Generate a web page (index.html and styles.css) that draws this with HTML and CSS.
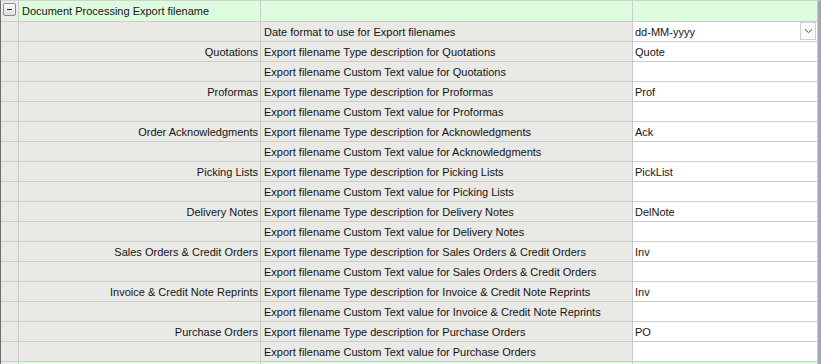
FILE: index.html
```html
<!DOCTYPE html>
<html lang="en">
<head>
  <meta charset="UTF-8">
  <title>Document Processing Export filename</title>
  <link rel="stylesheet" href="styles.css">
</head>
<body>
  <div class="grid">
    <!-- Fila de grupo -->
    <div class="row group">
      <div class="cell indent"><span class="toggle"></span></div>
      <div class="cell cat title">Document Processing Export filename</div>
      <div class="cell desc"></div>
      <div class="cell val"></div>
    </div>

    <div class="row">
      <div class="cell indent"></div>
      <div class="cell cat"></div>
      <div class="cell desc">Date format to use for Export filenames</div>
      <div class="cell val combo">dd-MM-yyyy
        <span class="drop"><svg width="9" height="6" viewBox="0 0 9 6"><path d="M1 1.5 L4.5 4.5 L8 1.5" fill="none" stroke="#555" stroke-width="1"/></svg></span>
      </div>
    </div>

    <div class="row"><div class="cell indent"></div><div class="cell cat">Quotations</div><div class="cell desc">Export filename Type description for Quotations</div><div class="cell val">Quote</div></div>
    <div class="row"><div class="cell indent"></div><div class="cell cat"></div><div class="cell desc">Export filename Custom Text value for Quotations</div><div class="cell val"></div></div>

    <div class="row"><div class="cell indent"></div><div class="cell cat">Proformas</div><div class="cell desc">Export filename Type description for Proformas</div><div class="cell val">Prof</div></div>
    <div class="row"><div class="cell indent"></div><div class="cell cat"></div><div class="cell desc">Export filename Custom Text value for Proformas</div><div class="cell val"></div></div>

    <div class="row"><div class="cell indent"></div><div class="cell cat">Order Acknowledgments</div><div class="cell desc">Export filename Type description for Acknowledgments</div><div class="cell val">Ack</div></div>
    <div class="row"><div class="cell indent"></div><div class="cell cat"></div><div class="cell desc">Export filename Custom Text value for Acknowledgments</div><div class="cell val"></div></div>

    <div class="row"><div class="cell indent"></div><div class="cell cat">Picking Lists</div><div class="cell desc">Export filename Type description for Picking Lists</div><div class="cell val">PickList</div></div>
    <div class="row"><div class="cell indent"></div><div class="cell cat"></div><div class="cell desc">Export filename Custom Text value for Picking Lists</div><div class="cell val"></div></div>

    <div class="row"><div class="cell indent"></div><div class="cell cat">Delivery Notes</div><div class="cell desc">Export filename Type description for Delivery Notes</div><div class="cell val">DelNote</div></div>
    <div class="row"><div class="cell indent"></div><div class="cell cat"></div><div class="cell desc">Export filename Custom Text value for Delivery Notes</div><div class="cell val"></div></div>

    <div class="row"><div class="cell indent"></div><div class="cell cat">Sales Orders &amp; Credit Orders</div><div class="cell desc">Export filename Type description for Sales Orders &amp; Credit Orders</div><div class="cell val">Inv</div></div>
    <div class="row"><div class="cell indent"></div><div class="cell cat"></div><div class="cell desc">Export filename Custom Text value for Sales Orders &amp; Credit Orders</div><div class="cell val"></div></div>

    <div class="row"><div class="cell indent"></div><div class="cell cat">Invoice &amp; Credit Note Reprints</div><div class="cell desc">Export filename Type description for Invoice &amp; Credit Note Reprints</div><div class="cell val">Inv</div></div>
    <div class="row"><div class="cell indent"></div><div class="cell cat"></div><div class="cell desc">Export filename Custom Text value for Invoice &amp; Credit Note Reprints</div><div class="cell val"></div></div>

    <div class="row"><div class="cell indent"></div><div class="cell cat">Purchase Orders</div><div class="cell desc">Export filename Type description for Purchase Orders</div><div class="cell val">PO</div></div>
    <div class="row"><div class="cell indent"></div><div class="cell cat"></div><div class="cell desc">Export filename Custom Text value for Purchase Orders</div><div class="cell val"></div></div>

    <!-- Siguiente grupo (cortado) -->
    <div class="row group">
      <div class="cell indent"><span class="toggle"></span></div>
      <div class="cell cat"></div>
      <div class="cell desc"></div>
      <div class="cell val"></div>
    </div>
  </div>
</body>
</html>
```

FILE: styles.css
```css
body {
  margin: 0;
  font-family: "Liberation Sans", Arial, sans-serif;
  font-size: 11px;
  color: #141414;
  background: #e9e9e6;
  overflow: hidden;
}
.grid {
  width: 817px;
  height: 364px;
  border-left: 1px solid #6e6e6e;
  border-right: 3px solid #a4a5b6;
  border-top: 1px solid #d2d2d2;
  background: #e9e9e6;
  overflow: hidden;
}
.row {
  display: flex;
  height: 19px;
  border-bottom: 1px solid #cbcbcb;
}
.row.group {
  height: 20px;
}
.cell {
  box-sizing: border-box;
  border-right: 1px solid #cbcbcb;
  display: flex;
  align-items: center;
  white-space: nowrap;
  overflow: hidden;
}
.indent {
  width: 18px;
  position: relative;
}
.cat {
  width: 242px;
  justify-content: flex-end;
  padding-right: 2px;
}
.desc {
  width: 372px;
  padding-left: 3px;
}
.val {
  width: 185px;
  background: #fff;
  padding-left: 2px;
  position: relative;
}
.group .cat,
.group .desc,
.group .val {
  background: #ddfcdd;
}
.group .title {
  justify-content: flex-start;
  padding-left: 3px;
  overflow: visible;
}
.group .indent {
  background: #ececec;
}
.toggle {
  position: absolute;
  left: 2px;
  top: 2px;
  width: 11px;
  height: 11px;
  border: 1px solid #8c8c8c;
  border-radius: 2px;
  background: linear-gradient(#ffffff, #dcdcdc);
}
.toggle::after {
  content: "";
  position: absolute;
  left: 3px;
  top: 5px;
  width: 5px;
  height: 1px;
  background: #222;
}
.drop {
  position: absolute;
  right: 1px;
  top: 0;
  width: 16px;
  height: 18px;
  box-sizing: border-box;
  border: 1px solid #d0d0d0;
  background: #fbfbfb;
  display: flex;
  align-items: center;
  justify-content: center;
}
```
